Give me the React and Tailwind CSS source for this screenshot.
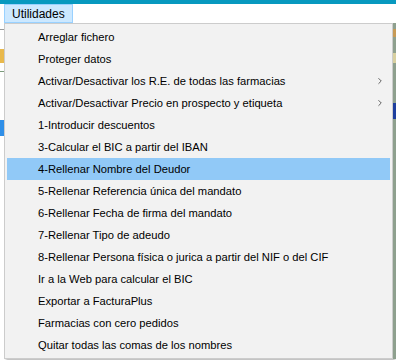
import { ChevronRight } from 'lucide-react';

const items = [
  { label: 'Arreglar fichero' },
  { label: 'Proteger datos' },
  { label: 'Activar/Desactivar los R.E. de todas las farmacias', sub: true },
  { label: 'Activar/Desactivar Precio en prospecto y etiqueta', sub: true },
  { label: '1-Introducir descuentos' },
  { label: '3-Calcular el BIC a partir del IBAN' },
  { label: '4-Rellenar Nombre del Deudor', active: true },
  { label: '5-Rellenar Referencia única del mandato' },
  { label: '6-Rellenar Fecha de firma del mandato' },
  { label: '7-Rellenar Tipo de adeudo' },
  { label: '8-Rellenar Persona física o jurica a partir del NIF o del CIF' },
  { label: 'Ir a la Web para calcular el BIC' },
  { label: 'Exportar a FacturaPlus' },
  { label: 'Farmacias con cero pedidos' },
  { label: 'Quitar todas las comas de los nombres' },
];

export default function App() {
  return (
    <div className="relative h-[360px] w-[396px] overflow-hidden bg-white text-[11.2px] text-black" style={{ fontFamily: '"Liberation Sans", sans-serif' }}>
      <div className="h-[4px] bg-[#0799bf]" />

      {/* menu bar */}
      <div className="flex h-[19px] items-stretch bg-white pl-[4px]">
        <div className="flex items-center border border-[#99d1ff] bg-[#cce8ff] px-[7px] text-[12px] leading-none">
          Utilidades
        </div>
      </div>

      <div className="flex">
        {/* window behind, left edge */}
        <div className="flex w-[4px] flex-col">
          <div className="mt-[6px] h-[1px] bg-[#9a9a9a]" />
          <div className="mt-[19px] h-[14px] bg-[#e9b94c]" />
          <div className="mt-[8px] h-[1px] bg-[#7a9a7a]" />
          <div className="mt-[48px] h-[16px] bg-[#2f8fe8]" />
          <div className="flex-1" />
        </div>

        {/* dropdown */}
        <div className="w-[389px] border border-[#cccccc] bg-[#f2f2f2] p-[2px] shadow-[2px_2px_2px_rgba(0,0,0,0.25)]">
          {items.map((item) => (
            <div
              key={item.label}
              className={`flex h-[22px] items-center pl-[31px] pr-[5px] ${item.active ? 'bg-[#91c9f7]' : ''}`}
            >
              <span className="flex-1 whitespace-nowrap">{item.label}</span>
              {item.sub ? <ChevronRight className="h-[10px] w-[10px] text-[#333]" strokeWidth={1.8} /> : null}
            </div>
          ))}
        </div>

        {/* window behind, right edge */}
        <div className="flex w-[3px] flex-col bg-[#8ea08e]">
          <div className="mt-[6px] h-[8px] bg-[#c79a56]" />
          <div className="mt-[16px] h-[10px] bg-[#d8d0a0]" />
          <div className="mt-[40px] h-[16px] bg-[#1e3f9e]" />
          <div className="flex-1" />
        </div>
      </div>
    </div>
  );
}
